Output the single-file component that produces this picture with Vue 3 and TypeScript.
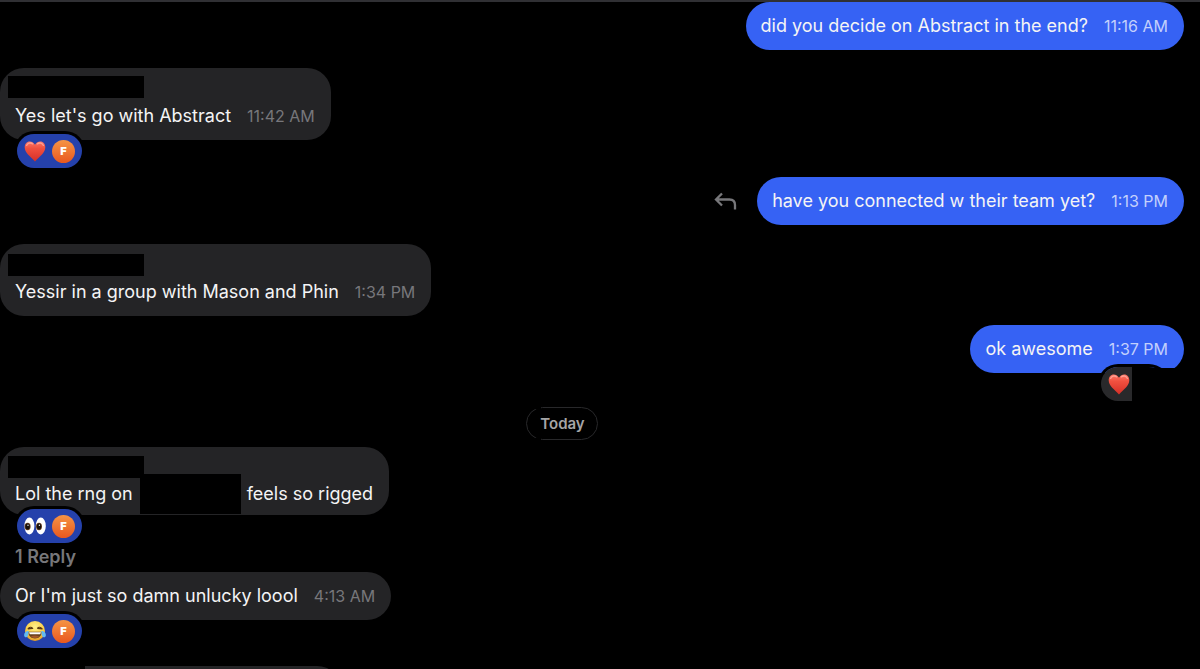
<script setup lang="ts">
type Emoji = 'heart' | 'eyes' | 'joy'

interface Message {
  id: number
  mine?: boolean
  hiddenName?: boolean
  text: string
  tail?: string
  time?: string
  reaction?: Emoji
  reactor?: boolean
  replies?: string
  canReply?: boolean
}

interface Group {
  id: string
  label?: string
  messages: Message[]
}

const groups: Group[] = [
  {
    id: 'earlier',
    messages: [
      { id: 1, mine: true, text: 'did you decide on Abstract in the end?', time: '11:16 AM' },
      { id: 2, hiddenName: true, text: "Yes let's go with Abstract", time: '11:42 AM', reaction: 'heart', reactor: true },
      { id: 3, mine: true, text: 'have you connected w their team yet?', time: '1:13 PM', canReply: true },
      { id: 4, hiddenName: true, text: 'Yessir in a group with Mason and Phin', time: '1:34 PM' },
      { id: 5, mine: true, text: 'ok awesome', time: '1:37 PM', reaction: 'heart' },
    ],
  },
  {
    id: 'today',
    label: 'Today',
    messages: [
      { id: 6, hiddenName: true, text: 'Lol the rng on', tail: 'feels so rigged', reaction: 'eyes', reactor: true, replies: '1 Reply' },
      { id: 7, text: "Or I'm just so damn unlucky loool", time: '4:13 AM', reaction: 'joy', reactor: true },
    ],
  },
]
</script>

<template>
  <main class="chat">
    <div class="topline"></div>
    <section v-for="group in groups" :key="group.id" class="group">
      <h2 v-if="group.label" class="day"><span>{{ group.label }}</span></h2>
      <article
        v-for="m in group.messages"
        :key="m.id"
        class="row"
        :class="[`row-${m.id}`, { mine: m.mine }]"
      >
        <button v-if="m.canReply" class="reply" type="button" aria-label="Reply">
          <svg viewBox="0 0 24 20" width="24" height="20" fill="none" stroke="currentColor" stroke-width="2.3">
            <path d="M8 2.500 2 8.500l6 6M2 8.500H15.500q5.500 0 5.500 5.500v4.500" />
          </svg>
        </button>
        <div class="bubble" :class="{ named: m.hiddenName }">
          <div v-if="m.hiddenName" class="name"></div>
          <p class="line">
            <span>{{ m.text }}</span>
            <span v-if="m.tail" class="gap"><span class="block"></span></span>
            <span v-if="m.tail">{{ m.tail }}</span>
            <time v-if="m.time">{{ m.time }}</time>
          </p>
          <button v-if="m.reaction" class="reaction" :class="{ own: m.reactor }" type="button" :aria-label="m.reaction">
            <svg v-if="m.reaction === 'heart'" viewBox="0 0 22 22" width="22" height="22">
              <defs>
                <linearGradient :id="`heart-${m.id}`" x1="0" y1="0" x2="0" y2="1">
                  <stop offset="0" stop-color="#ff7768" />
                  <stop offset="0.35" stop-color="#f0503f" />
                  <stop offset="1" stop-color="#d52f27" />
                </linearGradient>
              </defs>
              <path
                :fill="`url(#heart-${m.id})`"
                d="M11 4.8C9.500 2.200 7.800 1.500 5.800 1.500 2.700 1.500.700 4 .700 7.300c0 5.700 5.300 8.600 10.300 14.100 5-5.500 10.300-8.400 10.300-14.100C21.300 4 19.300 1.500 16.200 1.500c-2 0-3.700.700-5.200 3.300z"
              />
              <path d="M2.600 5.400C3.500 3.200 6.500 2.100 8.700 3.900M13.300 3.900c2.200-1.800 5.200-.700 6.100 1.500" fill="none" stroke="#ffb3a5" stroke-width="1.300" stroke-linecap="round" opacity="0.750" />
            </svg>
            <svg v-else-if="m.reaction === 'eyes'" viewBox="0 0 22 22" width="22" height="22">
              <ellipse cx="5.400" cy="11" rx="5" ry="8.500" fill="#fff" />
              <ellipse cx="16.800" cy="11" rx="5" ry="8.500" fill="#fff" />
              <ellipse cx="3.600" cy="11.500" rx="3" ry="3.700" fill="#6b4226" />
              <ellipse cx="15" cy="11.500" rx="3" ry="3.700" fill="#6b4226" />
              <ellipse cx="3.600" cy="11.500" rx="2.200" ry="2.900" fill="#17100c" />
              <ellipse cx="15" cy="11.500" rx="2.200" ry="2.900" fill="#17100c" />
              <circle cx="4" cy="10.300" r="0.700" fill="#fff" />
              <circle cx="15.400" cy="10.300" r="0.700" fill="#fff" />
            </svg>
            <svg v-else viewBox="0 0 22 22" width="22" height="22">
              <defs>
                <radialGradient id="joy-face" cx="0.5" cy="0.3" r="0.7">
                  <stop offset="0" stop-color="#fff08a" />
                  <stop offset="0.6" stop-color="#fbd04b" />
                  <stop offset="1" stop-color="#e59a26" />
                </radialGradient>
              </defs>
              <circle cx="11" cy="11" r="10" fill="url(#joy-face)" />
              <path d="M3.800 8.800 8.700 8.300Q6.500 6 3.800 8.800M13.300 8.300l4.900.5Q15.500 6 13.300 8.300" fill="none" stroke="#5c3a14" stroke-width="1.200" stroke-linejoin="round" />
              <path d="M4.300 11.800h13.400c0 4-2.700 6.700-6.700 6.700s-6.700-2.700-6.700-6.700z" fill="#67401b" />
              <path d="M5 12.200h12l-.8 2H5.800z" fill="#fff" />
              <path d="M6.700 16.500q4.300-2.200 8.600 0-1.800 1.600-4.300 1.600t-4.300-1.600z" fill="#a4572a" />
              <path d="M4.600 10.800C1.800 11 .1 13 .1 15c0 1.600 1 2.500 2.200 2.300C4.300 17 4.600 13.500 4.600 10.800zM17.400 10.800C20.200 11 21.900 13 21.900 15c0 1.600-1 2.500-2.200 2.300-2-.3-2.300-3.800-2.300-6.500z" fill="#62baf3" />
            </svg>
            <span v-if="m.reactor" class="avatar">F</span>
          </button>
        </div>
        <button v-if="m.replies" class="thread" type="button">{{ m.replies }}</button>
      </article>
    </section>
    <div class="next"></div>
  </main>
</template>

<style>
html,
body {
  background: #000;
  overflow: hidden;
}
</style>

<style scoped>
.chat {
  box-sizing: border-box;
  height: 100vh;
  overflow: hidden;
  background: #000;
  color: #f4f4f5;
  font-family: Inter, "Liberation Sans", sans-serif;
  font-size: 18px;
  line-height: 24px;
}
button {
  border: 0;
  padding: 0;
  background: none;
  font: inherit;
  cursor: pointer;
}
.topline {
  height: 2px;
  background: #303034;
}
.row {
  display: flex;
  flex-direction: column;
  align-items: flex-start;
}
.row.mine {
  flex-direction: row;
  justify-content: flex-end;
  align-items: center;
  padding-right: 16px;
}
.row-2 { margin-top: 18px; }
.row-3 { margin-top: 37px; }
.row-4 { margin-top: 19px; }
.row-5 { margin-top: 9px; }
.row-6 { margin-top: 7px; }
.bubble {
  position: relative;
  padding: 12px 16px 12px 15px;
  border-radius: 24px;
  background: #242426;
}
.bubble.named {
  padding-top: 8px;
}
.mine .bubble {
  background: #3662f4;
}
.name {
  width: 136px;
  height: 22px;
  margin: 0 0 6px -7px;
  background: #000;
}
.row-4 .bubble { padding-top: 10px; }
.row-4 .name { margin-bottom: 4px; }
.row-6 .bubble { padding-top: 9px; padding-bottom: 9px; }
.row-6 .name { margin-bottom: 4px; }
.line {
  display: flex;
  align-items: baseline;
  margin: 0;
  white-space: nowrap;
}
time {
  margin-left: 16px;
  color: #77777b;
  font-size: 16px;
}
.mine time {
  color: #c3d0fc;
}
.gap {
  position: relative;
  align-self: stretch;
  width: 101px;
  margin: 0 6px 0 7px;
}
.block {
  position: absolute;
  inset: -8px 0;
  background: #000;
}
.reply {
  display: flex;
  margin-right: 19px;
  color: #77777a;
}
.reaction {
  position: absolute;
  z-index: 1;
  top: calc(100% - 6px);
  left: 17px;
  display: flex;
  align-items: center;
  gap: 6px;
  height: 34px;
  padding: 0 7px;
  border-radius: 17px;
  background: #2541ab;
  box-shadow: 0 0 0 3px #000;
}
.reaction svg {
  display: block;
}
.mine .reaction {
  right: 18px;
  left: auto;
  width: 65px;
  background: linear-gradient(90deg, #29292b 31px, #000 31px);
}
.mine .reaction::after {
  content: "";
  position: absolute;
  top: 1px;
  right: -18px;
  width: 52px;
  height: 33px;
  background: #000;
}
.avatar {
  width: 23px;
  height: 23px;
  border-radius: 50%;
  background: linear-gradient(#f59445, #e9581f);
  color: #fff;
  font-size: 11px;
  font-weight: 900;
  line-height: 23px;
  text-align: center;
}
.day {
  display: flex;
  justify-content: center;
  margin: 34px 76px 0 0;
  font-size: 15px;
  font-weight: 600;
}
.day span {
  position: relative;
  box-sizing: border-box;
  height: 33px;
  padding: 0 12px 0 13px;
  border: 1px solid #28282a;
  border-radius: 17px;
  color: #a5a5a7;
  line-height: 32px;
}
.day span::before {
  content: "";
  position: absolute;
  top: -1px;
  bottom: -1px;
  left: 8px;
  width: 6px;
  background: linear-gradient(#000 2px, transparent 2px 31px, #000 31px);
}
.thread {
  margin: 30px 0 3px 15px;
  color: #77777a;
  font-size: 18px;
  font-weight: 600;
}
.next {
  width: 256px;
  height: 48px;
  margin: 46px 0 0 85px;
  border-radius: 0 24px 24px 0;
  background: #242426;
}
</style>
